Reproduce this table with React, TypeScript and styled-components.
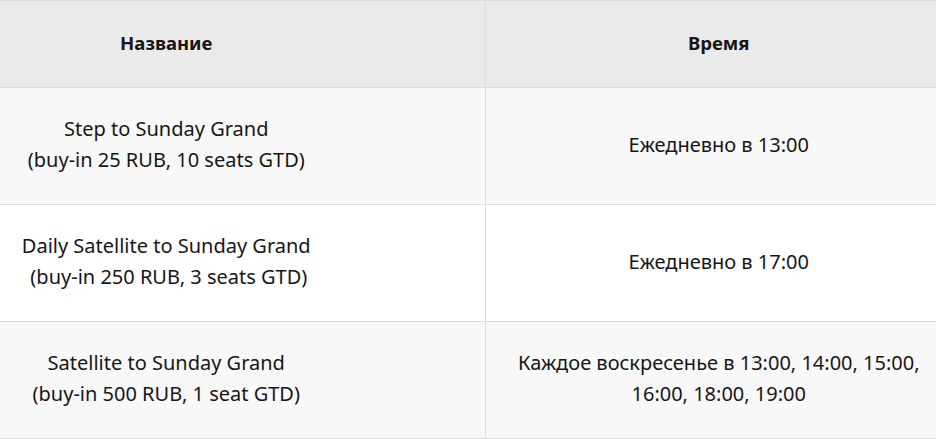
import styled, { createGlobalStyle } from "styled-components";

const GlobalStyle = createGlobalStyle`
  html, body {
    margin: 0;
    padding: 0;
    background: #ffffff;
  }
  body {
    font-family: "Noto Sans", "Liberation Sans", sans-serif;
    color: #161616;
  }
`;

const Table = styled.table`
  width: 936px;
  border-collapse: collapse;
  table-layout: fixed;
  font-size: 20px;
  line-height: 31px;
`;

const Row = styled.tr<{ $shade?: boolean }>`
  background: ${(p) => (p.$shade ? "#f8f8f8" : "#ffffff")};
  border-top: 1px solid #dddddd;
  border-bottom: 1px solid #dddddd;
`;

const HeadRow = styled.tr`
  background: #eaeaea;
  border-top: 1px solid #dddddd;
  border-bottom: 1px solid #dddddd;
`;

const Cell = styled.td<{ $first?: boolean }>`
  height: 117px;
  box-sizing: border-box;
  text-align: center;
  vertical-align: middle;
  padding: ${(p) => (p.$first ? "0 152px 4px 0" : "0 0 4px 16px")};
  border-left: ${(p) => (p.$first ? "none" : "1px solid #dddddd")};
`;

const HeadCell = styled(Cell).attrs({ as: "th" })`
  height: 87px;
  font-size: 18.5px;
  font-weight: 700;
`;

const rows = [
  {
    name: ["Step to Sunday Grand", "(buy-in 25 RUB, 10 seats GTD)"],
    time: ["Ежедневно в 13:00"],
  },
  {
    name: ["Daily Satellite to Sunday Grand", "\u00a0(buy-in 250 RUB, 3 seats GTD)"],
    time: ["Ежедневно в 17:00"],
  },
  {
    name: ["Satellite to Sunday Grand", "(buy-in 500 RUB, 1 seat GTD)"],
    time: ["Каждое воскресенье в 13:00, 14:00, 15:00,", "16:00, 18:00, 19:00"],
  },
];

function Lines({ lines }: { lines: string[] }) {
  return (
    <>
      {lines.map((line, i) => (
        <span key={i}>
          {i > 0 && <br />}
          {line}
        </span>
      ))}
    </>
  );
}

export default function App() {
  return (
    <>
      <GlobalStyle />
      <Table>
        <colgroup>
          <col style={{ width: 485 }} />
          <col />
        </colgroup>
        <thead>
          <HeadRow>
            <HeadCell $first>Название</HeadCell>
            <HeadCell>Время</HeadCell>
          </HeadRow>
        </thead>
        <tbody>
          {rows.map((row, i) => (
            <Row key={i} $shade={i % 2 === 0}>
              <Cell $first>
                <Lines lines={row.name} />
              </Cell>
              <Cell>
                <Lines lines={row.time} />
              </Cell>
            </Row>
          ))}
        </tbody>
      </Table>
    </>
  );
}
